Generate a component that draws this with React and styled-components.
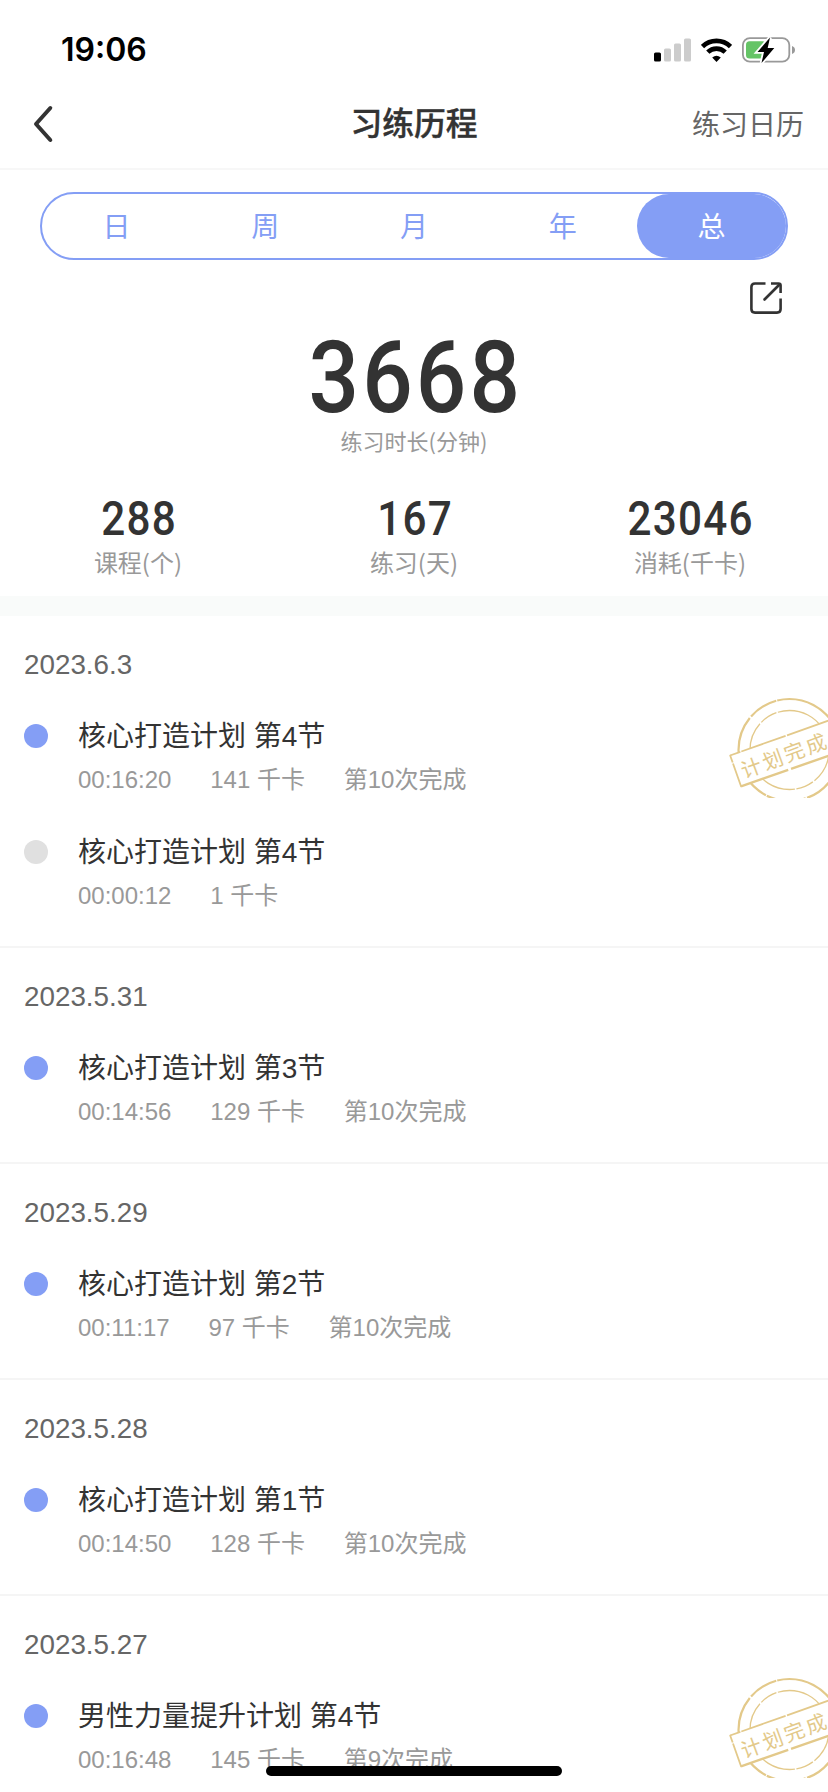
import React from "react";
import styled, { createGlobalStyle } from "styled-components";

const BLUE = "#849ef5";
const GOLD = "#e3c98a";
const CJK = '"Liberation Sans", "Noto Sans CJK SC", sans-serif';

const GlobalStyle = createGlobalStyle`
  * { box-sizing: border-box; }
  body { margin: 0; background: #fff; }
`;

const Screen = styled.div`
  position: relative;
  width: 828px;
  height: 1792px;
  overflow: hidden;
  background: #fff;
  font-family: ${CJK};
  color: #333;
`;

const StatusBar = styled.div`
  height: 80px;
  padding: 20px 33px 0 61px;
  display: flex;
  align-items: center;
  justify-content: space-between;
`;

const Clock = styled.div`
  font: 600 32px/40px Inter, sans-serif;
  color: #000;
`;

const StatusIcons = styled.div`
  display: flex;
  align-items: center;
  gap: 10px;
  svg { display: block; }
`;

const NavBar = styled.header`
  height: 90px;
  padding: 0 24px 0 32px;
  border-bottom: 2px solid #f7f7f7;
  display: grid;
  grid-template-columns: 1fr auto 1fr;
  align-items: center;
`;

const BackButton = styled.button`
  padding: 0;
  border: 0;
  background: none;
  justify-self: start;
  svg { display: block; }
`;

const NavTitle = styled.h1`
  margin: 0 4px 6px -4px;
  font: 500 31.8px/44px "Noto Sans CJK SC", sans-serif;
  -webkit-text-stroke: 0.4px #333;
`;

const NavLink = styled.span`
  margin-top: 3px;
  justify-self: end;
  font-size: 28px;
  line-height: 40px;
  color: #666;
`;

const Tabs = styled.nav`
  margin: 22px 40px 0;
  height: 68px;
  border: 2px solid ${BLUE};
  border-radius: 34px;
  display: flex;
`;

const Tab = styled.div`
  flex: 1;
  padding-top: 3px;
  display: flex;
  align-items: center;
  justify-content: center;
  border-radius: 32px;
  font-size: 28px;
  line-height: 40px;
  background: ${(p) => (p.$active ? BLUE : "transparent")};
  color: ${(p) => (p.$active ? "#fff" : BLUE)};
`;

const ShareRow = styled.div`
  height: 54px;
  padding: 22px 46px 0;
  display: flex;
  justify-content: flex-end;
`;

const Figure = styled.div`
  font-family: Roboto, sans-serif;
  font-weight: 500;
  font-size: ${(p) => (p.$large ? 101 : 48)}px;
  line-height: ${(p) => (p.$large ? 95 : 54)}px;
  letter-spacing: ${(p) => (p.$large ? 3.5 : 1.4)}px;
  margin-right: ${(p) => (p.$large ? -3.5 : -1.4)}px;
  transform: scaleX(0.88);
`;

const Label = styled.div`
  font-family: "Noto Sans CJK SC", sans-serif;
  font-size: ${(p) => (p.$small ? 22 : 24)}px;
  line-height: ${(p) => (p.$small ? 30 : 32)}px;
  color: #999;
`;

const Total = styled.section`
  height: 150px;
  padding-top: 16px;
  display: flex;
  flex-direction: column;
  align-items: center;
`;

const Stats = styled.section`
  height: 132px;
  padding-top: 28px;
  display: grid;
  grid-template-columns: repeat(3, 276px);
`;

const Stat = styled.div`
  display: flex;
  flex-direction: column;
  align-items: center;
`;

const Band = styled.div`
  height: 20px;
  background: #f9fbfa;
`;

const Day = styled.section`
  border-bottom: 2px solid #f5f5f5;
  padding: 29px 0 26px;
`;

const DayDate = styled.h2`
  margin: 0 0 31px 24px;
  font-size: 27.8px;
  line-height: 40px;
  font-weight: 400;
  color: #666;
`;

const Session = styled.article`
  position: relative;
  height: 88px;
  padding-left: 24px;
  display: flex;
  gap: 30px;
  & + & { margin-top: 28px; }
`;

const Dot = styled.span`
  width: 24px;
  height: 24px;
  margin-top: 8px;
  border-radius: 50%;
  background: ${(p) => (p.$done ? BLUE : "#e0e0e0")};
`;

const SessionTitle = styled.div`
  padding-top: 1px;
  font-size: 28px;
  line-height: 40px;
  white-space: pre;
`;

const Meta = styled.div`
  margin-top: 5px;
  display: flex;
  gap: 38.8px;
  font-size: 24px;
  line-height: 36px;
  color: #999;
`;

const StampBadge = styled.svg`
  position: absolute;
  top: -20px;
  right: 0;
  width: 100px;
  height: 102px;
`;

const HomeIndicator = styled.div`
  position: absolute;
  left: 266px;
  bottom: 16px;
  width: 296px;
  height: 10px;
  border-radius: 5px;
  background: #000;
`;

const Signal = () => (
  <svg width="37" height="24" viewBox="0 0 37 24">
    <rect x="0" y="14.5" width="7" height="9" rx="1.6" fill="#000" />
    <g fill="#ccc">
      <rect x="10" y="10.5" width="7" height="13" rx="1.6" />
      <rect x="20" y="5.5" width="7" height="18" rx="1.6" />
      <rect x="30" y="0.5" width="7" height="23" rx="1.6" />
    </g>
  </svg>
);

const Wifi = () => (
  <svg width="31" height="24" viewBox="0 0 31 24">
    <g fill="none" stroke="#000" strokeWidth="4.6">
      <path d="M1.5 8.6 A20 20 0 0 1 29.5 8.6" />
      <path d="M6.8 14.2 A12.4 12.4 0 0 1 24.2 14.2" />
    </g>
    <path d="M15.5 24 L11.2 19.6 Q15.5 16 19.8 19.6 Z" fill="#000" />
  </svg>
);

const Battery = () => (
  <svg width="53" height="26" viewBox="0 0 53 26">
    <rect x="0.9" y="1.1" width="46.4" height="23.6" rx="7" fill="#fff" stroke="#999" strokeWidth="1.8" />
    <path d="M50 9 Q53 10.2 53 13 Q53 15.8 50 17 Z" fill="#999" />
    <rect x="4" y="4.2" width="20" height="17.4" rx="3.6" fill="#65c466" />
    <path d="M28 0.5 L15.5 15 H22 L19.5 26 L32.3 11 H25.7 Z" fill="#000" stroke="#fff" strokeWidth="3.6" paintOrder="stroke" />
  </svg>
);

const BackIcon = () => (
  <svg width="22" height="40" viewBox="0 0 22 40">
    <path d="M18.3 4 L4 20 L18.3 36" fill="none" stroke="#333" strokeWidth="4" strokeLinecap="round" strokeLinejoin="round" />
  </svg>
);

const ShareIcon = () => (
  <svg width="32" height="32" viewBox="0 0 32 32" fill="none" stroke="#333" strokeWidth="2.6">
    <path d="M15.5 1.5 H5 Q1.4 1.5 1.4 5 V27 Q1.4 30.6 5 30.6 H27 Q30.6 30.6 30.6 27 V16.5" />
    <path d="M21 1.5 H28.5 Q30.6 1.5 30.6 3.5 V11" />
    <path d="M29.5 2.5 L14.5 17.5" strokeLinecap="round" />
  </svg>
);

const Stamp = () => (
  <StampBadge viewBox="0 0 100 102">
    <g fill="none" stroke={GOLD}>
      <circle cx="61.5" cy="54" r="51" strokeWidth="2.2" strokeDasharray="62 1.5 40 1 90 2 30 1" />
      <circle cx="61.5" cy="54" r="39.5" strokeWidth="1.3" strokeDasharray="35 2 18 1.5 50 2 8 1" />
      <path d="M1.5 59.5 L110 21.2 V56.8 L13.5 90.5 Z" fill="#fff" stroke="none" />
      <path d="M2 59.5 L110 21.2" strokeWidth="1.8" strokeDasharray="11 1 47 1.5 60" />
      <path d="M13 90.3 L110 56.5" strokeWidth="2.4" strokeDasharray="50 3 44" />
      <path d="M2 59 L13.3 91" strokeWidth="1.8" strokeDasharray="8 1 26" />
    </g>
    <text
      transform="translate(16.2 82.4) rotate(-20.3)"
      fill={GOLD}
      fontFamily="'Noto Sans CJK SC', sans-serif"
      fontSize="20.5"
      letterSpacing="2.5"
    >
      计划完<tspan letterSpacing="0">成</tspan>
    </text>
  </StampBadge>
);

const TABS = ["日", "周", "月", "年", "总"];

const STATS = [
  ["288", "课程(个)"],
  ["167", "练习(天)"],
  ["23046", "消耗(千卡)"],
];

const DAYS = [
  {
    date: "2023.6.3",
    sessions: [
      { title: "核心打造计划 第4节", meta: ["00:16:20", "141 千卡", "第10次完成"], done: true, stamp: true },
      { title: "核心打造计划 第4节", meta: ["00:00:12", "1 千卡"] },
    ],
  },
  { date: "2023.5.31", sessions: [{ title: "核心打造计划 第3节", meta: ["00:14:56", "129 千卡", "第10次完成"], done: true }] },
  { date: "2023.5.29", sessions: [{ title: "核心打造计划 第2节", meta: ["00:11:17", "97 千卡", "第10次完成"], done: true }] },
  { date: "2023.5.28", sessions: [{ title: "核心打造计划 第1节", meta: ["00:14:50", "128 千卡", "第10次完成"], done: true }] },
  {
    date: "2023.5.27",
    sessions: [{ title: "男性力量提升计划 第4节", meta: ["00:16:48", "145 千卡", "第9次完成"], done: true, stamp: true }],
  },
];

export default function App() {
  return (
    <Screen>
      <GlobalStyle />
      <StatusBar>
        <Clock>19:06</Clock>
        <StatusIcons>
          <Signal />
          <Wifi />
          <Battery />
        </StatusIcons>
      </StatusBar>
      <NavBar>
        <BackButton aria-label="返回">
          <BackIcon />
        </BackButton>
        <NavTitle>习练历程</NavTitle>
        <NavLink>练习日历</NavLink>
      </NavBar>
      <Tabs>
        {TABS.map((t) => (
          <Tab key={t} $active={t === "总"}>{t}</Tab>
        ))}
      </Tabs>
      <ShareRow>
        <ShareIcon />
      </ShareRow>
      <Total>
        <Figure $large>3668</Figure>
        <Label $small>练习时长(分钟)</Label>
      </Total>
      <Stats>
        {STATS.map(([value, label]) => (
          <Stat key={label}>
            <Figure>{value}</Figure>
            <Label>{label}</Label>
          </Stat>
        ))}
      </Stats>
      <Band />
      {DAYS.map((day) => (
        <Day key={day.date}>
          <DayDate>{day.date}</DayDate>
          {day.sessions.map((s, i) => (
            <Session key={i}>
              <Dot $done={s.done} />
              <div>
                <SessionTitle>{s.title}</SessionTitle>
                <Meta>
                  {s.meta.map((m) => (
                    <span key={m}>{m}</span>
                  ))}
                </Meta>
              </div>
              {s.stamp && <Stamp />}
            </Session>
          ))}
        </Day>
      ))}
      <HomeIndicator />
    </Screen>
  );
}
